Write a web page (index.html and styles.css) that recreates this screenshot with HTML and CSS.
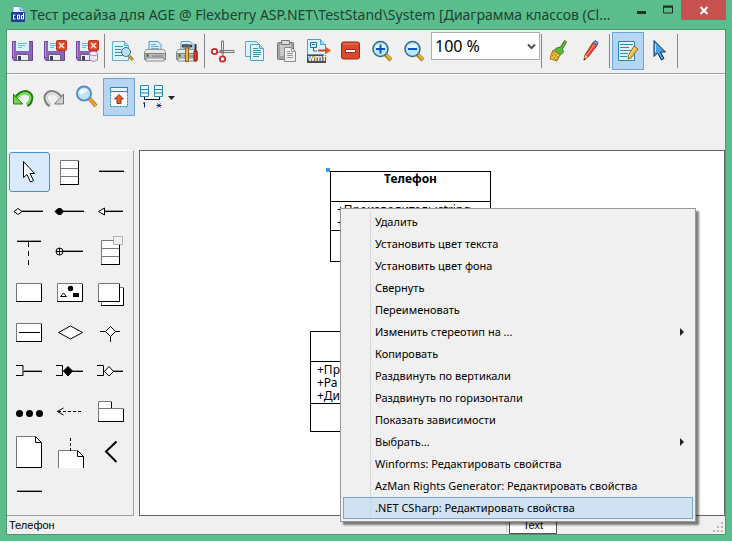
FILE: index.html
```html
<!DOCTYPE html>
<html lang="ru">
<head>
<meta charset="utf-8">
<title>Тест ресайза для AGE</title>
<link rel="stylesheet" href="styles.css">
</head>
<body>
<div class="window">
  <header class="titlebar">
    <svg class="app-icon" width="15" height="18" viewBox="0 0 15 18"><path d="M2 .5h7l4 4V9H2z" fill="#eef8ff" stroke="#5c9ed0"/><path d="M9 .5v4h4" fill="#a9d5ef" stroke="#5c9ed0"/><rect y="6" width="14" height="10" rx="1" fill="#1d3f94"/><path d="M4.500 9h-2v4h2M8.500 9h-2v4h2V9M12.500 7v6h-2V9.500h2" fill="none" stroke="#fff"/></svg>
    <h1 class="title">Тест ресайза для AGE @ Flexberry ASP.NET\TestStand\System [Диаграмма классов (Cl...</h1>
    <div class="window-buttons">
      <button class="wbtn" aria-label="Свернуть окно"><svg width="12" height="12"><path d="M1 8.500h9" stroke="#1c3328" stroke-width="3"/></svg></button>
      <button class="wbtn" aria-label="Развернуть окно"><svg width="12" height="12"><path d="M1.500 3h9v6h-9z" fill="none" stroke="#1c3328"/><path d="M1 2.500h10" stroke="#1c3328" stroke-width="2"/></svg></button>
      <button class="wbtn close" aria-label="Закрыть"><svg width="12" height="12"><path d="M2.500 3l7 7M9.500 3l-7 7" stroke="#fff" stroke-width="2"/></svg></button>
    </div>
  </header>
  <main class="client">
    <svg class="defs" aria-hidden="true"><defs>
      <g id="floppy"><path d="M1.500 2.500h20v19H3l-1.500-2z" fill="#9061bb" stroke="#67429a"/><path d="M2.500 3v15" stroke="#b994da"/><path d="M5 2h13v10H5z" fill="#d8f1fb"/><path d="M7 4.500h9M7 6.500h7M7 8.500h4" stroke="#7bb8d3"/><path d="M5.500 15.500h12v6h-12z" fill="#ececf1" stroke="#65657a"/><path d="M7 17h3v4H7z" fill="#444057"/></g>
      <g id="redx"><rect x="13.500" y="1.500" width="10" height="10" rx="1" fill="#d84b30" stroke="#b6311b"/><path d="M16 4l5 5M21 4l-5 5" stroke="#ffe5dc" stroke-width="1.500"/></g>
      <g id="printer"><path d="M6 11V2.500h9l3 3V11z" fill="#d5f0fb" stroke="#4d9fc4"/><path d="M8 5.500h5M8 7.500h8M8 9.500h8" stroke="#65aecd"/><path d="M3 10.500h18l2 4H1z" fill="#e8e8e8" stroke="#9a9a9a"/><path d="M1.500 14.500h21v6h-21z" fill="#bdbdbd" stroke="#808080"/><path d="M3 19h18v3H3z" fill="#eee" stroke="#8a8a8a"/><circle cx="4.500" cy="16.500" r="1.500" fill="#348a25"/><path d="M9 17h11" stroke="#777"/></g>
      <g id="lens"><path d="M14.500 15.500l5.500 5.500" stroke="#a97913" stroke-width="4"/><path d="M14.500 15l5.500 5.500" stroke="#edba42" stroke-width="2"/><circle cx="9.500" cy="10" r="7.500" fill="#b9e4fa" stroke="#366b82" stroke-width="1.500"/><path d="M4.500 9a5 4 0 0 1 10 0" fill="#e8f8ff"/></g>
    </defs></svg>
    <div class="toolbar first">
      <button class="tool" aria-label="Сохранить"><svg viewBox="0 0 24 24"><use href="#floppy"/></svg></button>
      <button class="tool" aria-label="Сохранить и закрыть"><svg viewBox="0 0 24 24"><use href="#floppy"/><use href="#redx"/></svg></button>
      <button class="tool" aria-label="Сохранить, закрыть и разблокировать"><svg viewBox="0 0 24 24"><use href="#floppy"/><use href="#redx"/><path d="M14.500 15v6q4 3 8 0v-6z" fill="#eee7f2" stroke="#b574c4"/><ellipse cx="18.500" cy="14.500" rx="4" ry="2" fill="#fff" stroke="#b574c4"/></svg></button>
      <span class="sep"></span>
      <button class="tool" aria-label="Предварительный просмотр"><svg viewBox="0 0 24 24"><path d="M1.500 2.500h12l4 4v15h-16z" fill="#dff4fc" stroke="#62afd0"/><path d="M13.500 2.500v4h4" fill="#a2d6eb" stroke="#62afd0"/><path d="M4 7.500h8M4 10.500h6M4 13.500h6M4 16.500h8" stroke="#3887a8"/><path d="M18 17l4 4" stroke="#a97913" stroke-width="3"/><path d="M18 17l4 4" stroke="#edba42"/><circle cx="15" cy="13" r="4.500" fill="#b5e0f8" stroke="#416d82"/></svg></button>
      <button class="tool" aria-label="Печать"><svg viewBox="0 0 24 24"><use href="#printer"/></svg></button>
      <button class="tool" aria-label="Параметры печати"><svg viewBox="0 0 24 24"><use href="#printer"/><path d="M7.500 8V6h9v2z" fill="#999" stroke="#222"/><path d="M10.500 9h3v13.500h-3z" fill="#f0b83b" stroke="#85601b"/><path d="M20.500 5v8" stroke="#333" stroke-width="2"/><path d="M19 12h3v10h-3z" fill="#df3e2a" stroke="#902011"/></svg></button>
      <span class="sep"></span>
      <button class="tool" aria-label="Вырезать"><svg viewBox="0 0 24 24"><path d="M10.500 2h2v12h-2zM9 11.500h14v2H9z" fill="#eee" stroke="#777"/><path d="M5 13h7M12 11v8" stroke="#777"/><circle cx="3.500" cy="12.500" r="2.700" fill="#fff" stroke="#c92c26" stroke-width="1.800"/><circle cx="11.500" cy="20" r="2.700" fill="#fff" stroke="#c92c26" stroke-width="1.800"/></svg></button>
      <button class="tool" aria-label="Копировать"><svg viewBox="0 0 24 24"><path d="M2.500 2.500h11l4 4v11h-15z" fill="#d9f2fc" stroke="#55a8cc"/><path d="M7.500 5.500h9l4 4v12h-13z" fill="#e5f7fd" stroke="#4ea2c8"/><path d="M16.500 5.500v4h4" fill="#acd" stroke="#4ea2c8"/><path d="M10 9.500h5M10 11.500h8M10 13.500h8M10 15.500h8M10 17.500h6" stroke="#3d8cb1"/></svg></button>
      <button class="tool" aria-label="Вставить"><svg viewBox="0 0 24 24"><rect x="2.500" y="3.500" width="16" height="17" rx="1" fill="#a2a2a2" stroke="#777"/><path d="M5 5h11v12H5z" fill="#c9c9c9"/><path d="M6.500 1.500h8v4h-8z" fill="#ddd" stroke="#777"/><path d="M9.500 8.500h7l4 4v10h-11z" fill="#f0f0f0" stroke="#888"/><path d="M16.500 8.500v4h4M12 12.500h3M12 14.500h6M12 16.500h6M12 18.500h6" fill="none" stroke="#999"/></svg></button>
      <button class="tool" aria-label="Экспорт в wmf"><svg viewBox="0 0 24 24"><path d="M.5 0.500h13l5 5V16H.5z" fill="#dff5fe" stroke="#43a0c7"/><path d="M13.500.5v5h5" fill="#a9d9ed" stroke="#43a0c7"/><path d="M3.500 3.500h6v5h-6zM5 5.500h3M6.500 9v3H10" fill="none" stroke="#1c6f9c"/><path d="M11 11.500h10" stroke="#c84618" stroke-width="2"/><path d="M19 8l5 3.500-5 3.500z" fill="#e55a24"/><path d="M0 15.500h19V24H0z" fill="#4d4d4d"/><text class="wmf" x="1" y="22">wmf</text></svg></button>
      <button class="tool" aria-label="Удалить"><svg viewBox="0 0 24 24"><rect x="2.500" y="3" width="18" height="17" rx="2" fill="#d94932" stroke="#a52412"/><path d="M4 5h15" stroke="#f07a60"/><path d="M6.500 10.500h10v3h-10z" fill="#fff" stroke="#972517"/></svg></button>
      <button class="tool" aria-label="Увеличить"><svg viewBox="0 0 24 24"><use href="#lens"/><path d="M5 10h9M9.500 5.500v9" stroke="#0a55c4" stroke-width="2"/></svg></button>
      <button class="tool" aria-label="Уменьшить"><svg viewBox="0 0 24 24"><use href="#lens"/><path d="M5 10h9" stroke="#0a55c4" stroke-width="2"/></svg></button>
      <span class="zoom">
        <select class="zoom-select" aria-label="Масштаб"><option>100 %</option></select>
        <svg class="zoom-arrow" width="9" height="8"><path d="M1 1.500l3.500 3.500L8 1.500" fill="none" stroke="#505050" stroke-width="2"/></svg>
      </span>
      <span class="sep"></span>
      <button class="tool" aria-label="Цвет фона"><svg viewBox="0 0 24 24"><path d="M16.500 1.500l2 1.500-4 7 1 3-3 3-7-4 3-3 4-1z" fill="#60b53c" stroke="#347d1d"/><path d="M5 11l7 5-3 6-3-1-4-1 1-4z" fill="#efc43e" stroke="#a47514"/><path d="M6 13l-2 5M8 15l-2 5M10 17l-2 4" stroke="#94701c" stroke-dasharray="2 1"/></svg></button>
      <button class="tool" aria-label="Цвет текста"><svg viewBox="0 0 24 24"><path d="M13 3.500l4 3L8 18l-4 3 1-5z" fill="#e84c36" stroke="#a72d1d"/><path d="M14.500 5.500l-8 11" stroke="#ff9f88"/><path d="M13 3.500l2-2 3 2-1 3z" fill="#6aa6cd" stroke="#2e6388"/><path d="M4 21l1-5 3 2z" fill="#efc789"/><path d="M3.500 21.500l1-2.500 1.500 1z" fill="#222"/></svg></button>
      <span class="sep"></span>
      <button class="tool on" aria-label="Редактировать" aria-pressed="true"><svg viewBox="0 0 24 24"><path d="M2.500 2.500h16v19h-16z" fill="#def5fd" stroke="#2787aa"/><path d="M4 5.500h13M4 8.500h9M4 11.500h12M4 14.500h8M4 17.500h7" stroke="#338ba9"/><path d="M18 7l4 3-7 9-3 1 .5-4z" fill="#efbb43" stroke="#946b1d"/><path d="M19 9l-6 8" stroke="#ffe292"/></svg></button>
      <button class="tool" aria-label="Указатель"><svg viewBox="0 0 24 24"><path d="M6 1.500v16l3.500-3.500 4 7 2.500-1.500-3.500-6.500h5z" fill="#49a4e7" stroke="#142c48"/><path d="M7.500 5v8" stroke="#b5e2ff"/></svg></button>
      <span class="sep"></span>
    </div>
    <div class="toolbar second">
      <button class="tool" aria-label="Отменить"><svg viewBox="0 0 24 24"><path d="M5 13q4-6 10-6 7 2 5 8-1 4-4 5" fill="none" stroke="#207a16" stroke-width="4"/><path d="M2.500 9v10h9l-3-3.500-3-2.500z" fill="#6adc45" stroke="#207a16"/><path d="M6 13q4-5 9-5 6 2 4 7-1 3-3 4" fill="none" stroke="#79e354" stroke-width="2"/></svg></button>
      <button class="tool" aria-label="Вернуть"><svg viewBox="0 0 24 24"><path d="M18 13Q14 7 8 7q-7 2-5 8 1 4 4 5" fill="none" stroke="#7d7d7d" stroke-width="4"/><path d="M20.500 9v10h-9l3-3.500 3-2.500z" fill="#d2d2d2" stroke="#777"/><path d="M17 13Q13 8 8 8q-6 2-4 7 1 3 3 4" fill="none" stroke="#e2e2e2" stroke-width="2"/></svg></button>
      <button class="tool" aria-label="Поиск"><svg viewBox="0 0 24 24"><path d="M14 13l7 8" stroke="#b06d16" stroke-width="4"/><path d="M14 13l7 8" stroke="#f5a83b" stroke-width="2"/><circle cx="9" cy="8.500" r="7" fill="#bde6fc" stroke="#578fc3" stroke-width="2"/><path d="M4 8a5 5 0 0 1 9-2q-4 0-6 4z" fill="#effbff"/></svg></button>
      <button class="tool on" aria-label="Показать панель" aria-pressed="true"><svg viewBox="0 0 24 24"><path d="M3.500 2.500h17v19h-17z" fill="#f6fcff" stroke="#2787a9" stroke-dasharray="2 1"/><path d="M3.500 2.500h17v4h-17z" fill="#dff7ff" stroke="#2787a9"/><path d="M12 9.500l4.500 4.500H14v4.500h-4V14H7.500z" fill="#e45d31" stroke="#9e3418"/></svg></button>
      <button class="tool drop" aria-label="Кратность связи"><svg class="relation" viewBox="0 0 40 24"><path d="M2.500.5h8v11h-8zM16.500.5h8v11h-8z" fill="#e7f8fe" stroke="#2b86a9"/><path d="M2.500 4.500h8M2.500 8h8M16.500 4.500h8M16.500 8h8" stroke="#2b86a9"/><path d="M6.500 12v2.500h15V12" fill="none" stroke="#111"/><path d="M5 18.500l1.500-1v5M18.500 20.500h5M19.500 18.500l3 4M22.500 18.500l-3 4" fill="none" stroke="#15209b"/><path d="M30 11h7l-3.500 4z" fill="#222"/></svg></button>
    </div>
    <div class="workspace">
      <div class="palette">
        <button class="shape selected" aria-label="Указатель"><svg><path d="M14.500 9.500v16l3.500-3 3.500 7.500 3-1.500-3.500-7h4.500z" fill="#fff" stroke="#000"/></svg></button>
        <button class="shape" aria-label="Класс"><svg><path d="M10.500 8.500h18v24h-18zM10.500 16.500h18M10.500 24.500h18" class="box"/><path d="M10 32.500h18.500V9" class="edge"/></svg></button>
        <button class="shape" aria-label="Ассоциация"><svg><path d="M8 18.500h25" class="soft"/><path d="M8 19.500h25" class="line"/></svg></button>

        <button class="shape" aria-label="Агрегация"><svg><path d="M13 18.500h21" class="soft"/><path d="M13 19.500h21" class="line"/><path d="M5 19.500l4-3 4 3-4 3z" fill="#fff" stroke="#000"/></svg></button>
        <button class="shape" aria-label="Композиция"><svg><path d="M13 18.500h21" class="soft"/><path d="M13 19.500h21" class="line"/><path d="M5 19.500l3-3h3l2.500 3-2.500 3H8z" stroke="#000"/></svg></button>
        <button class="shape" aria-label="Наследование"><svg><path d="M14 18.500h18" class="soft"/><path d="M14 19.500h18" class="line"/><path d="M7.500 19.500l6-3.500v7z" fill="#fff" stroke="#000"/></svg></button>

        <button class="shape" aria-label="Класс ассоциации"><svg><path d="M8 8.500h24" class="soft"/><path d="M8 9.500h24" class="line"/><path d="M19.500 10v23" class="line" stroke-dasharray="5 4"/></svg></button>
        <button class="shape" aria-label="Вложение"><svg><path d="M13 18.500h20" class="soft"/><path d="M6 19.500h27M9.500 16v7" class="line"/><circle cx="9.500" cy="19.500" r="3.500" class="line"/></svg></button>
        <button class="shape" aria-label="Параметризованный класс"><svg><path d="M10.500 8.500h18v24h-18zM10.500 16.500h18M10.500 24.500h18" class="box"/><path d="M10 32.500h18.500V9" class="edge"/><path d="M22.500 4.500h9v8h-9z" fill="#f0f0f0" stroke="#777" stroke-dasharray="1 1"/></svg></button>

        <button class="shape" aria-label="Объект"><svg><path d="M7.500 11.500h25v18h-25z" class="box"/><path d="M7 29.500h25.500V12" class="edge"/></svg></button>
        <button class="shape" aria-label="Изображение"><svg><path d="M7.500 11.500h25v18h-25z" class="box"/><path d="M7 29.500h25.500V12" class="edge"/><circle cx="20.500" cy="16.500" r="2.700"/><path d="M23 21h6v4h-6z"/><path d="M10.500 24.500l3-3.500 3 3.500z" fill="#fff" stroke="#000"/></svg></button>
        <button class="shape" aria-label="Мультиобъект"><svg><path d="M10.500 15.500h22v18h-22z" class="box"/><path d="M10 33.500h22.500V16" class="edge"/><path d="M7.500 11.500h21v18h-21z" class="box"/><path d="M7 29.500h21.500V12" class="edge"/></svg></button>

        <button class="shape" aria-label="Активный объект"><svg><path d="M7.500 11.500h25v18h-25z" class="box"/><path d="M7 29.500h25.500V12M10 20.500h21" class="edge"/></svg></button>
        <button class="shape" aria-label="Ромб"><svg><path d="M8.500 20.500L20.500 14l12 6.500-12 6.500z" fill="#fff" stroke="#000"/></svg></button>
        <button class="shape" aria-label="N-арная ассоциация"><svg><path d="M9 19.500h20M19.500 25v5" class="line"/><path d="M14.500 19.500l5-5 5 5-5 5z" fill="#fff" stroke="#000"/></svg></button>

        <button class="shape" aria-label="Квалификатор"><svg><path d="M7 13.500h7v10H7" class="line"/><path d="M14 18.500h19" class="soft"/><path d="M14 19.500h19" class="line"/></svg></button>
        <button class="shape" aria-label="Квалифицированная композиция"><svg><path d="M6 13.500h6.500v10H6M22 19.500h11" class="line"/><path d="M22 18.500h11" class="soft"/><path d="M13.500 19l4.500-4.500 4.500 4.500-4.500 5z" stroke="#000"/></svg></button>
        <button class="shape" aria-label="Квалифицированная агрегация"><svg><path d="M6 13.500h6.500v10H6M22 19.500h10" class="line"/><path d="M22 18.500h10" class="soft"/><path d="M13.500 19.500l4.500-5 4.500 5-4.500 4.500z" fill="#fff" stroke="#000"/></svg></button>

        <button class="shape" aria-label="Многоточие"><svg><circle cx="10.500" cy="21.500" r="3.500"/><circle cx="20.500" cy="21.500" r="3.500"/><circle cx="30.500" cy="21.500" r="3.500"/></svg></button>
        <button class="shape" aria-label="Зависимость"><svg><path d="M13.500 16l-6 3.500 6 3.500" class="line"/><path d="M8 19.500h24" class="line" stroke-dasharray="3 2"/></svg></button>
        <button class="shape" aria-label="Пакет"><svg><path d="M7.500 9.500h13v7h-13zM7.500 16.500h25v13h-25z" class="box"/><path d="M20.500 10v6M7 29.500h25.500V17" class="edge"/></svg></button>

        <button class="shape" aria-label="Заметка"><svg><path d="M7.500 4.500h19l6 6v25h-25z" class="box"/><path d="M7 35.500h25.500v-25h-6v-6l6 6" class="edge"/></svg></button>
        <button class="shape" aria-label="Связь заметки"><svg><path d="M8.500 36V18.500h19l6 6V36" class="box"/><path d="M33.500 36V24.500h-6v-6l6 6" class="edge"/><path d="M20.500 6v13" class="line" stroke-dasharray="3 2"/></svg></button>
        <button class="shape" aria-label="Угол"><svg><path d="M25.500 9.500l-10.500 10 10.500 10.500" class="line chevron"/></svg></button>

        <button class="shape" aria-label="Линия"><svg><path d="M8 18.500h25" class="soft"/><path d="M8 19.500h25" class="line"/></svg></button>
      </div>
      <div class="canvas">
        <section class="node phone">
          <span class="handle"></span>
          <h2 class="node-title">Телефон</h2>
          <div class="attrs">+Производитель:string<br>+</div>
        </section>
        <section class="node tablet">
          <h2 class="node-title"></h2>
          <div class="attrs">+Пр<br>+Ра<br>+Ди</div>
        </section>
        <div class="menu" role="menu">
          <button class="item" role="menuitem">Удалить</button>
          <button class="item" role="menuitem">Установить цвет текста</button>
          <button class="item" role="menuitem">Установить цвет фона</button>
          <button class="item" role="menuitem">Свернуть</button>
          <button class="item" role="menuitem">Переименовать</button>
          <button class="item sub" role="menuitem">Изменить стереотип на ...</button>
          <button class="item" role="menuitem">Копировать</button>
          <button class="item" role="menuitem">Раздвинуть по вертикали</button>
          <button class="item" role="menuitem">Раздвинуть по горизонтали</button>
          <button class="item" role="menuitem">Показать зависимости</button>
          <button class="item sub" role="menuitem">Выбрать...</button>
          <button class="item" role="menuitem">Winforms: Редактировать свойства</button>
          <button class="item" role="menuitem">AzMan Rights Generator: Редактировать свойства</button>
          <button class="item active" role="menuitem">.NET CSharp: Редактировать свойства</button>
        </div>
      </div>
    </div>
    <footer class="status">
      <span class="status-name">Телефон</span>
      <span class="status-text">Text</span>
      <svg class="grip" width="10" height="10"><path d="M8 0h2v2H8zM4 4h2v2H4zM8 4h2v2H8zM0 8h2v2H0zM4 8h2v2H4zM8 8h2v2H8z" fill="#b8b8b8"/></svg>
    </footer>
  </main>
</div>
</body>
</html>
```
FILE: styles.css
```css
* { box-sizing: border-box; }
body { margin: 0; font-family: "Noto Sans", sans-serif; font-size: 12px; color: #000; }
button { font: inherit; color: inherit; background: none; border: 0; padding: 0; margin: 0; }
svg { display: block; flex: none; }
h1, h2 { margin: 0; font-weight: 400; }

.window { min-height: 100vh; display: flex; flex-direction: column; padding: 0 6px 6px; background: #5bbd8b; }
.titlebar { height: 29px; display: flex; align-items: flex-start; padding-left: 5px; }
.app-icon { margin-top: 6px; }
.title { flex: 1; min-width: 0; margin-left: 4px; font-size: 14px; line-height: 29px; white-space: nowrap; overflow: hidden; color: #1f4231; }
.window-buttons { display: flex; }
.wbtn { width: 26px; height: 20px; display: flex; align-items: center; justify-content: center; }
.wbtn.close { width: 45px; background: #c75050; }

.client { flex: 1; display: flex; flex-direction: column; border: 1px solid #4c9873; background: #f0f0f0; }
.defs { position: absolute; width: 0; height: 0; }

.toolbar { display: flex; align-items: flex-start; }
.toolbar.first { height: 44px; padding-top: 2px; border-bottom: 1px solid #a0a0a0; }
.toolbar.second { height: 76px; padding-top: 3px; border-top: 1px solid #fff; }
.tool { flex: none; width: 32px; height: 38px; display: flex; align-items: center; justify-content: center; }
.tool svg { width: 24px; height: 24px; }
.tool.on { background: #b5d5f2; border: 1px solid #6aa5dc; }
.tool.drop { width: 46px; }
.tool .relation { width: 40px; }
.wmf { font: bold 8px "Noto Sans", sans-serif; fill: #fff; }
.sep { width: 1px; height: 34px; margin: 2px 2px 0 1px; background: #858585; }
.zoom { position: relative; width: 109px; height: 28px; }
.zoom-select { appearance: none; width: 100%; height: 100%; padding: 0 3px; border: 1px solid #abadb3; border-radius: 0; background: #fff; font: 16px "Noto Sans", sans-serif; color: #000; }
.zoom-arrow { position: absolute; right: 4px; top: 11px; pointer-events: none; }

.workspace { flex: 1; display: flex; gap: 5px; }
.palette { width: 127px; display: grid; grid-template-columns: repeat(3, 41px); grid-auto-rows: 40px; align-content: start; padding: 1px 0 0 2px; border-top: 1px solid #fff; border-right: 1px solid #a0a0a0; border-bottom: 1px solid #a0a0a0; }
.shape { border: 1px solid transparent; border-radius: 3px; }
.shape svg { width: 41px; height: 40px; margin: -1px; }
.shape.selected { background: #d9eafc; border-color: #3f93dc; }
.box { fill: #fff; stroke: #777; }
.edge { fill: none; stroke: #000; }
.line { fill: none; stroke: #000; }
.soft { fill: none; stroke: #999; }
.chevron { stroke-width: 2; }

.canvas { position: relative; flex: 1; background: #fff; border: 1px solid #646464; }
.node { position: absolute; border: 1px solid #000; background: #fff; font-size: 12px; line-height: 13px; }
.phone { left: 190px; top: 20px; width: 161px; height: 91px; }
.tablet { left: 170px; top: 180px; width: 181px; height: 101px; }
.handle { position: absolute; left: -5px; top: -4px; width: 4px; height: 4px; background: #4596e8; }
.node-title { height: 30px; font-size: 12px; font-weight: 700; line-height: 13px; text-align: center; border-bottom: 1px solid #000; }
.attrs { padding: 1px 6px; border-bottom: 1px solid #000; }

.menu { position: absolute; left: 200px; top: 57px; width: 356px; padding: 2px; border: 1px solid #979797; background: linear-gradient(#d7d7d7, #d7d7d7) 29px 2px / 1px calc(100% - 4px) no-repeat #f0f0f0; box-shadow: 3px 3px 2px rgba(0, 0, 0, .5); }
.item { position: relative; display: block; width: 100%; height: 22px; padding: 0 31px; border: 1px solid transparent; text-align: left; font-size: 11px; line-height: 20px; white-space: nowrap; }
.item.active { background: rgba(190, 218, 242, .65); border-color: #78a5d3; }
.item.sub::after { content: ""; position: absolute; right: 8px; top: 6px; border: 4px solid transparent; border-left-color: #222; border-right: 0; }

.status { height: 18px; display: flex; align-items: center; padding: 0 2px; font: 11px/16px "Liberation Sans", sans-serif; }
.status-name { flex: 1; max-width: 498px; border-right: 1px solid #d0d0d0; }
.status-text { width: 48px; height: 18px; margin-left: 2px; border: 1px solid #555; background: #fff; text-align: center; }
.grip { margin-left: auto; margin-top: 4px; }
```
